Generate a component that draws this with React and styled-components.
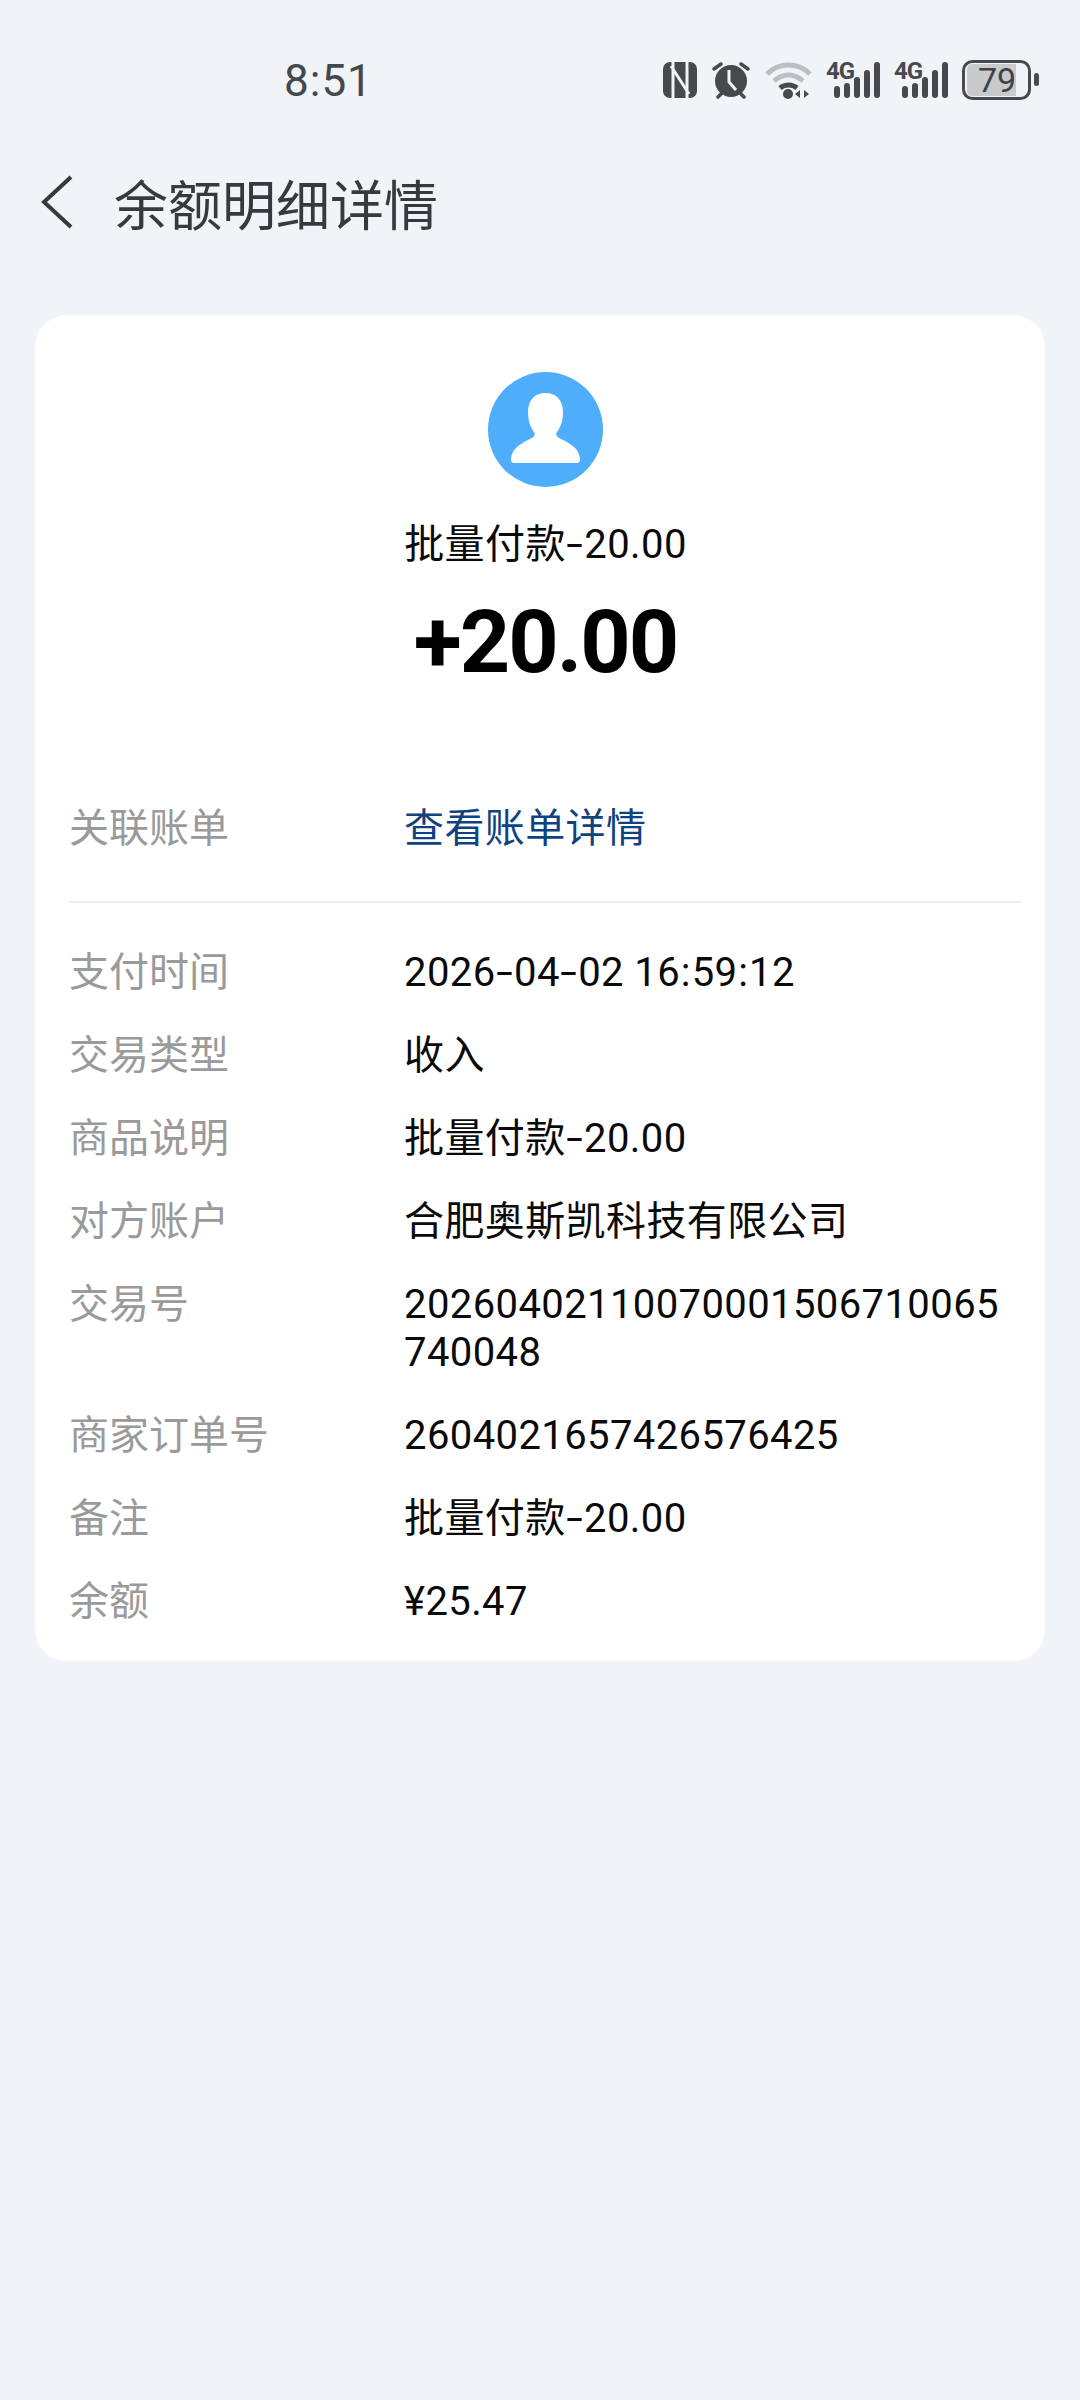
import React from 'react'
import styled, { createGlobalStyle } from 'styled-components'

const GlobalStyle = createGlobalStyle`
  html, body {
    margin: 0;
    padding: 0;
    background: #f0f3f8;
  }
  body {
    font-family: 'Roboto', 'Noto Sans CJK SC', sans-serif;
  }
`

const Page = styled.div`
  width: 1080px;
  height: 2400px;
  background: #f0f3f8;
  overflow: hidden;
`

const StatusBar = styled.div`
  height: 80px;
  margin-top: 40px;
  padding: 0 40px 0 284px;
  display: flex;
  align-items: center;
  justify-content: space-between;
  box-sizing: border-box;
`

const Clock = styled.div`
  font-size: 44px;
  color: #45474b;
  letter-spacing: 1px;
  margin-top: 1px;
`

const StatusIcons = styled.div`
  display: flex;
  align-items: center;
  gap: 14px;
`

const StatusSvg = styled.svg`
  overflow: visible;
`

const Header = styled.div`
  display: flex;
  align-items: center;
  height: 90px;
  margin-top: 37px;
  padding-left: 38px;
`

const Title = styled.div`
  font-size: 54px;
  color: #38393c;
  margin-left: 40px;
`

const Card = styled.div`
  margin: 68px 35px 0;
  height: 1346px;
  box-sizing: border-box;
  background: #fff;
  border-radius: 32px;
  padding: 57px 23px 0 34px;
`

const Hero = styled.div`
  display: flex;
  flex-direction: column;
  align-items: center;
`

const Subject = styled.div`
  margin-top: 31px;
  font-size: 40px;
  line-height: 54px;
  letter-spacing: 0.4px;
  color: #0a0a0a;
`

const Amount = styled.div`
  margin-top: 20px;
  font-size: 88px;
  line-height: 100px;
  font-weight: 700;
  letter-spacing: -2px;
  color: #000;
`

const Rows = styled.div`
  display: flex;
  flex-direction: column;
  gap: 35px;
`

const Row = styled.div`
  display: flex;
  font-size: 40px;
  line-height: 48px;
`

const Label = styled.div`
  width: 335px;
  flex: none;
  color: #9a9a9a;
`

const Value = styled.div`
  flex: 1;
  min-width: 0;
  padding-right: 7px;
  letter-spacing: 0.4px;
  color: ${p => (p.$link ? '#0f4280' : '#0a0a0a')};
  word-break: break-all;
`

const LinkRow = styled(Row)`
  margin-top: 113px;
  padding-bottom: 48px;
  border-bottom: 2px solid #eceef0;
  margin-bottom: 46px;
`

const Dash = styled.span`
  display: inline-block;
  margin: 0 3.5px;
  transform: scaleX(1.5);
`

const Colon = styled.span`
  margin: 0 0.75px;
`

// the phone font has wider dashes than Roboto
const spaced = text =>
  text.split(/([-:])/).map((part, i) => {
    if (part === '-') return <Dash key={i}>{part}</Dash>
    if (part === ':') return <Colon key={i}>{part}</Colon>
    return part
  })

const details = [
  ['支付时间', '2026-04-02 16:59:12'],
  ['交易类型', '收入'],
  ['商品说明', '批量付款-20.00'],
  ['对方账户', '合肥奥斯凯科技有限公司'],
  ['交易号', '20260402110070001506710065740048'],
  ['商家订单号', '2604021657426576425'],
  ['备注', '批量付款-20.00'],
  ['余额', '¥25.47'],
]

const Signal = () => (
  <StatusSvg width="54" height="38" viewBox="0 0 54 38" fill="#47494d">
    <text x="0" y="18" fontSize="24" fontWeight="700" fontFamily="Roboto, sans-serif" letterSpacing="-1">4G</text>
    <rect x="8" y="25" width="6" height="12" rx="3" />
    <rect x="18" y="22" width="6" height="15" rx="3" />
    <rect x="28" y="16" width="6" height="21" rx="3" />
    <rect x="38" y="9" width="6" height="28" rx="3" />
    <rect x="48" y="1" width="6" height="36" rx="3" />
  </StatusSvg>
)

export default function App() {
  return (
    <Page>
      <GlobalStyle />
      <StatusBar>
        <Clock>8:51</Clock>
        <StatusIcons>
          <svg width="34" height="36" viewBox="0 0 34 36">
            <rect width="34" height="36" rx="7" fill="#47494d" />
            <path d="M10 0v36M24 0v36M8 4l18 28" stroke="#f0f3f8" strokeWidth="3" fill="none" />
          </svg>
          <svg width="40" height="38" viewBox="0 0 40 38" fill="none">
            <circle cx="20" cy="20" r="16" fill="#47494d" />
            <path d="M18 9v12l7 8" stroke="#f0f3f8" strokeWidth="3" />
            <path d="M3 8l7-5M37 8l-7-5M7 36l4-4M33 36l-4-4" stroke="#47494d" strokeWidth="3.5" strokeLinecap="round" />
          </svg>
          <svg width="47" height="38" viewBox="0 0 47 38" fill="none">
            <path d="M2 13C14 1 33 1 45 13" stroke="#bcbec2" strokeWidth="5" />
            <path d="M9 20c9-8 20-8 29 0" stroke="#bcbec2" strokeWidth="5" />
            <path d="M15 27c5-4 12-4 17 0" stroke="#47494d" strokeWidth="5" />
            <circle cx="23" cy="33" r="5" fill="#47494d" />
            <path d="M35 29v8l-5-4zM39 29v8l5-4z" fill="#47494d" />
          </svg>
          <Signal />
          <Signal />
          <StatusSvg width="78" height="40" viewBox="0 0 78 40">
            <rect x="1.5" y="1.5" width="66" height="37" rx="9" fill="#f0f3f8" stroke="#47494d" strokeWidth="3" />
            <path d="M5 9a5 5 0 0 1 5-5h44v32H10a5 5 0 0 1-5-5z" fill="#c9cacc" />
            <text x="35" y="32" textAnchor="middle" fontSize="34" fontFamily="Roboto, sans-serif" fill="#3f4145">79</text>
            <rect x="72" y="13" width="5" height="13" rx="2.5" fill="#47494d" />
          </StatusSvg>
        </StatusIcons>
      </StatusBar>
      <Header>
        <svg width="36" height="54" viewBox="0 0 36 54" fill="none">
          <path d="M33 2L6 27l27 25" stroke="#38393c" strokeWidth="4" />
        </svg>
        <Title>余额明细详情</Title>
      </Header>
      <Card>
        <Hero>
          <svg width="115" height="115" viewBox="0 0 115 115">
            <circle cx="57.5" cy="57.5" r="57.5" fill="#4eaefc" />
            <path d="M57.5 21C68 21 75 28 75 40C75 50 72 56 69 60C67 63 69 65 73 67C83 72 91 76 92 87C92 90 91 91 88 91H27C24 91 23 90 23 87C24 76 32 72 42 67C46 65 48 63 46 60C43 56 40 50 40 40C40 28 47 21 57.5 21z" fill="#fff" />
          </svg>
          <Subject>{spaced('批量付款-20.00')}</Subject>
          <Amount>+20.00</Amount>
        </Hero>
        <LinkRow>
          <Label>关联账单</Label>
          <Value $link>查看账单详情</Value>
        </LinkRow>
        <Rows>
          {details.map(([label, value]) => (
            <Row key={label}>
              <Label>{label}</Label>
              <Value>{spaced(value)}</Value>
            </Row>
          ))}
        </Rows>
      </Card>
    </Page>
  )
}
